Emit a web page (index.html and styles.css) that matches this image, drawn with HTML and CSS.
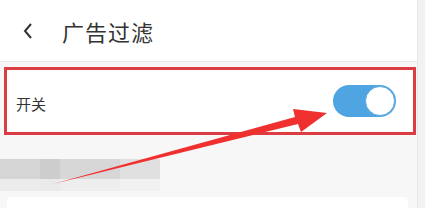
FILE: index.html
```html
<!DOCTYPE html>
<html lang="zh-CN">
<head>
    <meta charset="UTF-8">
    <meta name="viewport" content="width=device-width, initial-scale=1.0">
    <title>广告过滤</title>
    <link rel="stylesheet" href="styles.css">
</head>
<body>
    <div class="screen">
        <div class="page">
            <header class="header">
                <svg class="back" width="12" height="18" viewBox="0 0 12 18">
                    <polyline points="9,2 3,9 9,16" fill="none" stroke="#333" stroke-width="2" />
                </svg>
                <h1>广告过滤</h1>
            </header>

            <div class="row highlight">
                <span class="label">开关</span>
                <div class="switch on">
                    <div class="knob"></div>
                </div>
            </div>

            <!-- blurred caption -->
            <div class="mosaic">
                <div class="cell c1"></div>
                <div class="cell c2"></div>
                <div class="cell c3"></div>
                <div class="cell c4"></div>
                <div class="cell c5"></div>
                <div class="cell c6"></div>
                <div class="cell c7"></div>
                <div class="cell c8"></div>
            </div>

            <div class="card"></div>
        </div>
        <div class="scroll"></div>
    </div>

    <svg class="arrow" width="425" height="208" viewBox="0 0 425 208">
        <polygon points="53,184 295,117 293,109 327,113 301,132 298,124" fill="#f0302f" />
    </svg>
</body>
</html>
```

FILE: styles.css
```css
body {
    margin: 0;
    padding: 0;
    font-family: "Noto Sans CJK SC", "Noto Sans", sans-serif;
    color: #333;
    background-color: #f7f7f7;
    overflow: hidden;
}

.screen {
    display: grid;
    grid-template-columns: 417px 8px;
    height: 208px;
    overflow: hidden;
}

.page {
    display: flex;
    flex-direction: column;
    overflow: hidden;
}

.scroll {
    background-color: #f2f2f2;
    border-left: 1px solid #e6e6e6;
}

.header {
    height: 61px;
    flex-shrink: 0;
    background-color: #fff;
    border-bottom: 1px solid #e8e8e8;
    display: flex;
    align-items: center;
    padding-left: 22px;
}

.header .back {
    margin-top: 1px;
}

.header h1 {
    margin: 0 0 0 28px;
    font-size: 22px;
    font-weight: normal;
    color: #333;
    letter-spacing: 1px;
}

.row {
    margin: 5px 1px 0 4px;
    height: 62px;
    flex-shrink: 0;
    background-color: #fff;
    display: flex;
    align-items: center;
    justify-content: space-between;
    padding: 0 17px 0 9px;
}

.row.highlight {
    border: 3px solid #dc3d43;
}

.label {
    font-size: 15px;
    margin-top: 4px;
}

.switch {
    width: 63px;
    height: 32px;
    border-radius: 16px;
    background-color: #4fa5e2;
    position: relative;
    margin-top: -1px;
}

.switch .knob {
    position: absolute;
    top: 1px;
    right: 1px;
    width: 28px;
    height: 28px;
    border-radius: 50%;
    background-color: #fff;
    border: 1px solid #5aa8df;
}

.mosaic {
    margin-top: 24px;
    display: grid;
    grid-template-columns: 40px 20px 60px 40px;
    grid-template-rows: 20px 12px;
    width: 160px;
    flex-shrink: 0;
}

.cell.c1 { background-color: #d5d5d5; }
.cell.c2 { background-color: #cdcdcd; }
.cell.c3 { background-color: #d7d7d7; }
.cell.c4 { background-color: #e0e0e0; }
.cell.c5 { background-color: #ececec; }
.cell.c6 { background-color: #eaeaea; }
.cell.c7 { background-color: #eeeeee; }
.cell.c8 { background-color: #f1f1f1; }

.card {
    margin: 6px 9px 0 7px;
    flex: 1;
    background-color: #fff;
    border-radius: 4px 4px 0 0;
}

.arrow {
    position: absolute;
    top: 0;
    left: 0;
    pointer-events: none;
}
```
